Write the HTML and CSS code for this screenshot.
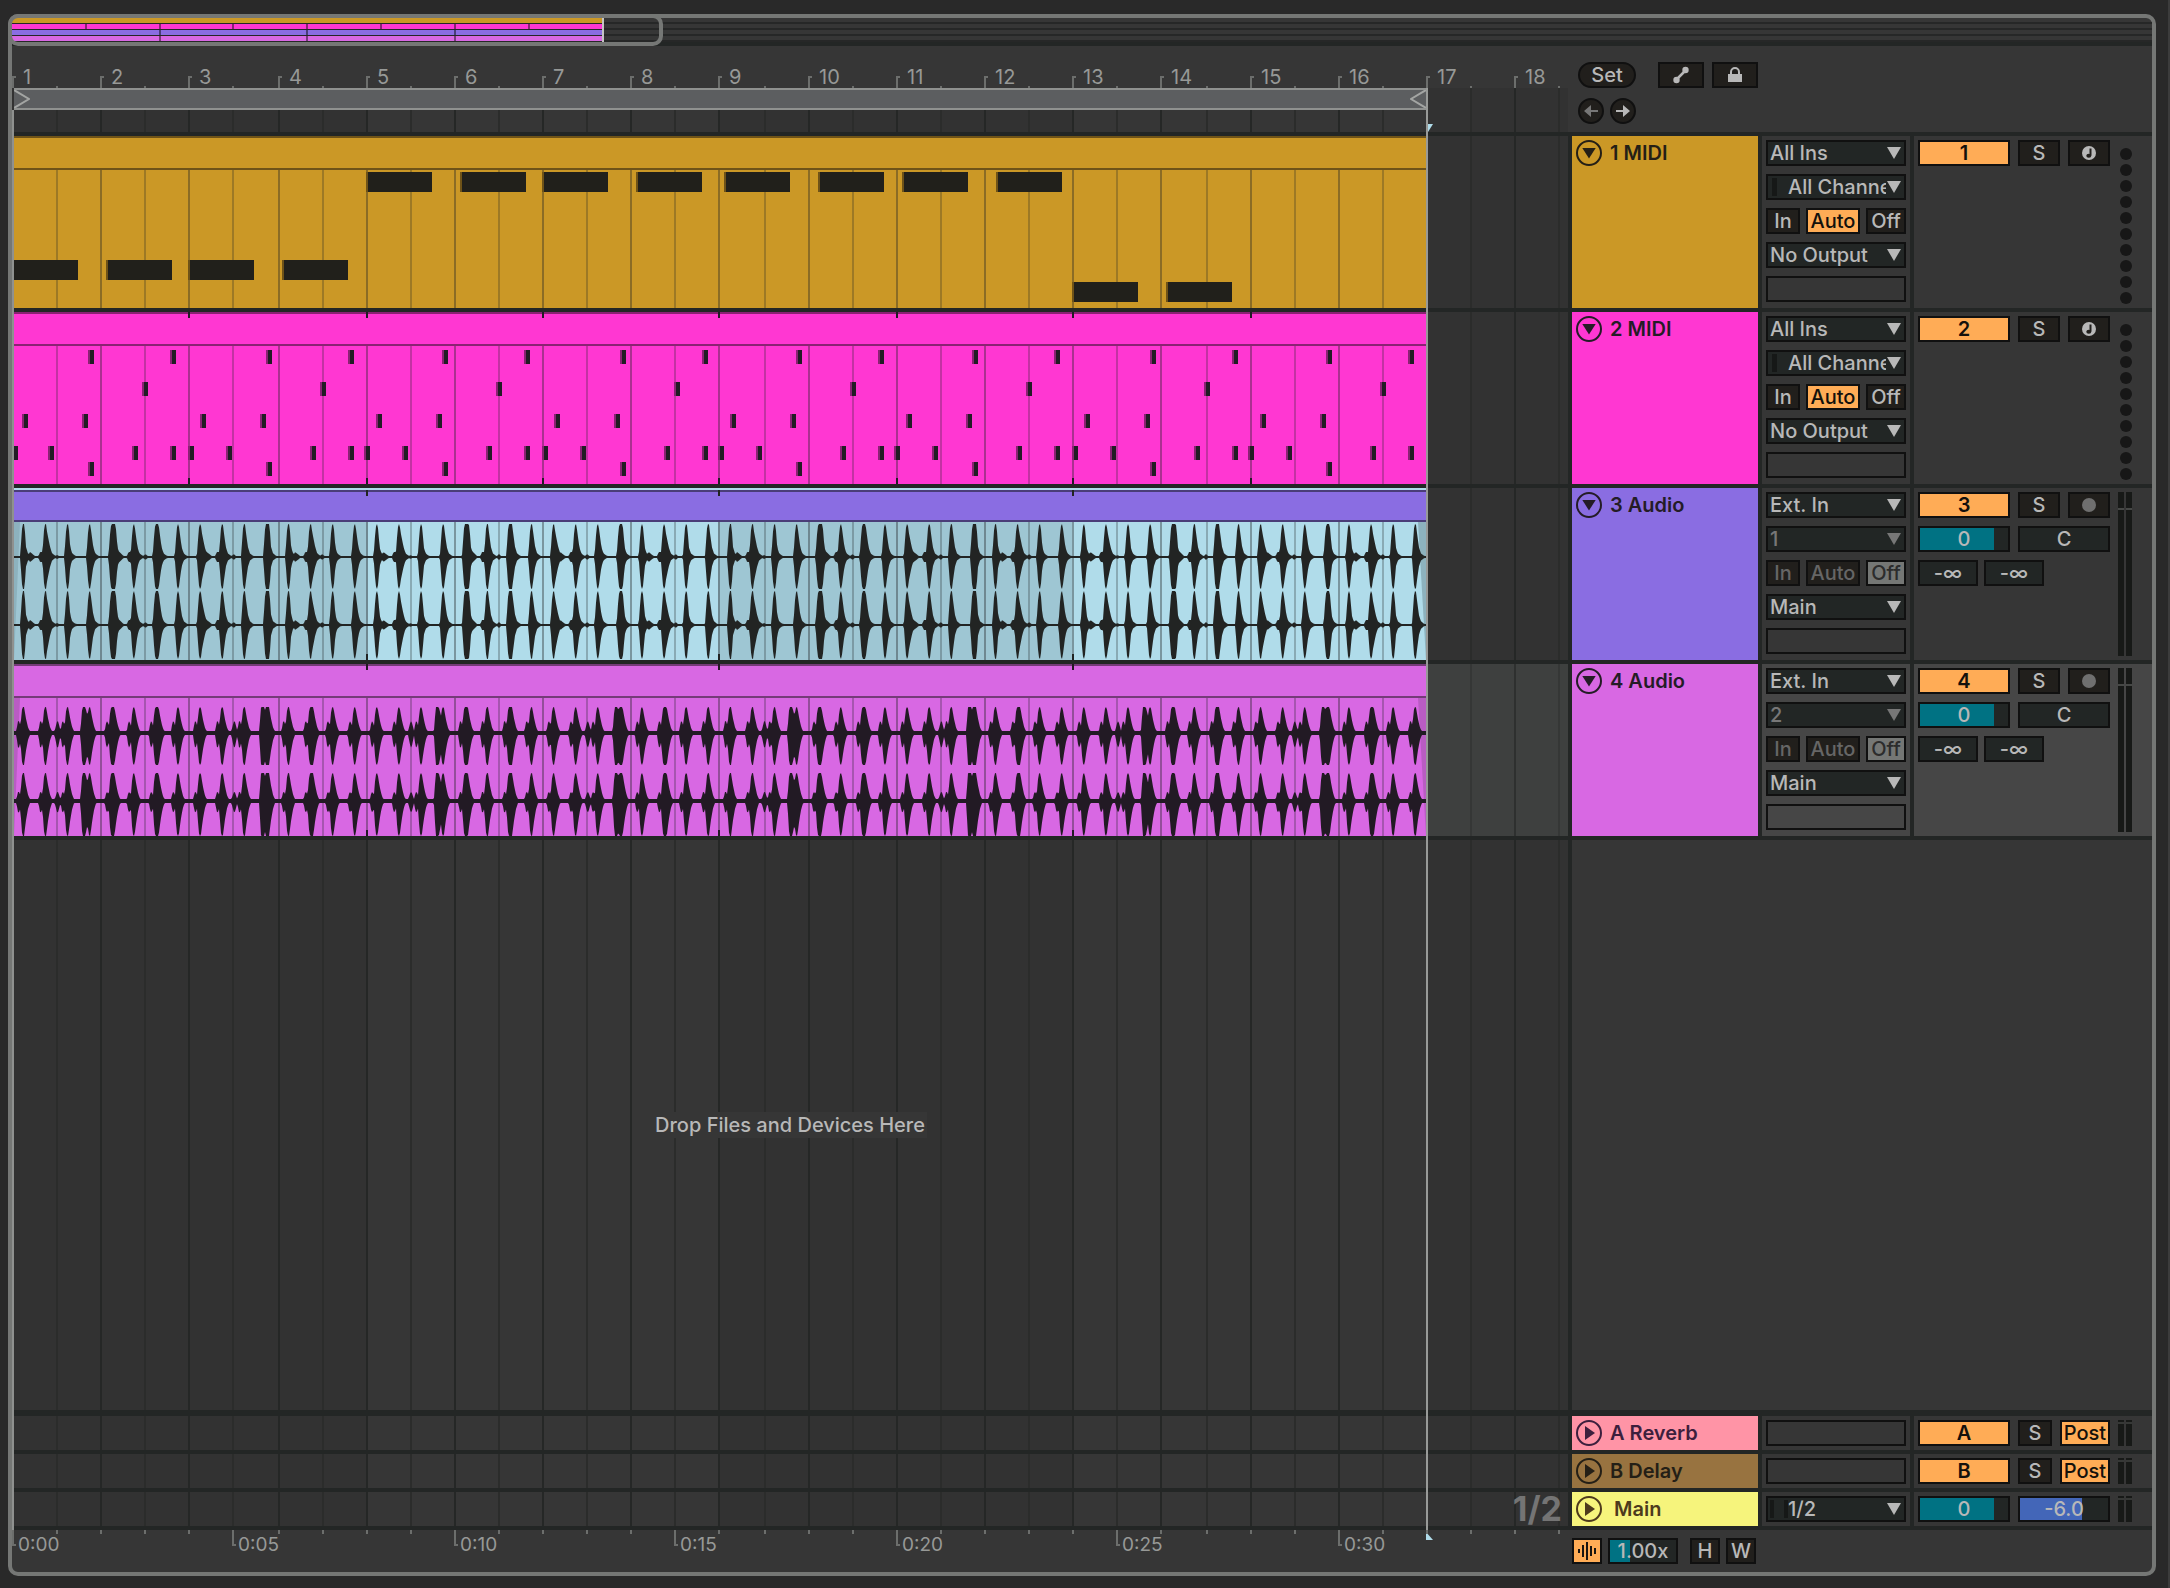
FILE: index.html
```html
<!DOCTYPE html>
<html lang="en">
<head>
<meta charset="utf-8">
<meta name="viewport" content="width=device-width, initial-scale=1">
<title>Arrangement</title>
<link rel="stylesheet" href="styles.css">
</head>
<body>
<main class="frame">
  <div class="overview" id="overview">
    <div class="overview-row"><div class="overview-clip gold"></div></div>
    <div class="overview-row"><div class="overview-clip pink" data-every="2"></div></div>
    <div class="overview-row"><div class="overview-clip violet" data-every="4"></div></div>
    <div class="overview-row"><div class="overview-clip orchid" data-every="4"></div></div>
    <div class="overview-end"></div>
    <div class="overview-view"></div>
  </div>

  <div class="arrangement">
    <header class="top">
      <div class="rulers">
        <div class="bar-ruler" id="bar-ruler"></div>
        <div class="lane scrub" data-lane>
          <div class="loop" data-span>
            <svg width="16" height="18" viewBox="0 0 16 18"><path d="M0 0L15 9L0 18" /></svg>
            <svg width="16" height="18" viewBox="0 0 16 18"><path d="M16 0L1 9L16 18" /></svg>
          </div>
        </div>
      </div>
      <div class="tools">
        <div class="tool-row">
          <button class="btn pill">Set</button>
          <button class="btn wide push" aria-label="Automation mode"><svg width="20" height="20" viewBox="0 0 20 20"><path d="M5 15L15 5" stroke="#b8b8b8" stroke-width="2.5"/><circle cx="5.500" cy="15" r="3.200" fill="#b8b8b8"/><circle cx="14.500" cy="5" r="3.200" fill="#b8b8b8"/></svg></button>
          <button class="btn wide" aria-label="Lock envelopes"><svg width="20" height="20" viewBox="0 0 20 20"><path d="M6 9V7a4 4 0 0 1 8 0v2" fill="none" stroke="#b8b8b8" stroke-width="2"/><rect x="3" y="9" width="14" height="8" fill="#b8b8b8"/></svg></button>
        </div>
        <div class="tool-row">
          <button class="btn round off" aria-label="Previous locator"><svg width="16" height="16" viewBox="0 0 16 16" fill="currentColor"><path d="M1 8L8 2V7H15V9H8V14Z"/></svg></button>
          <button class="btn round" aria-label="Next locator"><svg width="16" height="16" viewBox="0 0 16 16" fill="currentColor"><path d="M15 8L8 2V7H1V9H8V14Z"/></svg></button>
        </div>
      </div>
    </header>

    <section class="track">
      <div class="lane" data-lane>
        <div class="clip gold" data-span data-clip="bass"><div class="clip-title"></div></div>
      </div>
      <div class="head gold"><button class="fold" aria-label="Fold track"></button><span>1 MIDI</span></div>
      <div class="io">
        <div class="pick"><select aria-label="Input type"><option>All Ins</option></select></div>
        <div class="pick channel"><select aria-label="Input channel"><option>All Channels</option></select></div>
        <div class="monitor">
          <label><input type="radio" name="mon1"><span>In</span></label>
          <label><input type="radio" name="mon1" checked><span>Auto</span></label>
          <label><input type="radio" name="mon1"><span>Off</span></label>
        </div>
        <div class="pick"><select aria-label="Output type"><option>No Output</option></select></div>
        <div class="slot"></div>
      </div>
      <div class="mix">
        <div class="mix-controls">
          <div class="mix-row"><button class="btn on vol">1</button><button class="btn solo">S</button><button class="btn arm" aria-label="Arm"><svg width="16" height="16" viewBox="0 0 16 16"><circle cx="8" cy="8" r="7" fill="#b8b8b8"/><path d="M9.500 3.500V10.500" stroke="#211f1c" stroke-width="2"/><ellipse cx="7.800" cy="10.800" rx="2.500" ry="2" fill="#211f1c"/></svg></button></div>
        </div>
        <div class="dots"><i></i><i></i><i></i><i></i><i></i><i></i><i></i><i></i><i></i><i></i></div>
      </div>
    </section>

    <section class="track">
      <div class="lane" data-lane>
        <div class="clip pink" data-span data-clip="drums" data-every="2"><div class="clip-title"></div></div>
      </div>
      <div class="head pink"><button class="fold" aria-label="Fold track"></button><span>2 MIDI</span></div>
      <div class="io">
        <div class="pick"><select aria-label="Input type"><option>All Ins</option></select></div>
        <div class="pick channel"><select aria-label="Input channel"><option>All Channels</option></select></div>
        <div class="monitor">
          <label><input type="radio" name="mon2"><span>In</span></label>
          <label><input type="radio" name="mon2" checked><span>Auto</span></label>
          <label><input type="radio" name="mon2"><span>Off</span></label>
        </div>
        <div class="pick"><select aria-label="Output type"><option>No Output</option></select></div>
        <div class="slot"></div>
      </div>
      <div class="mix">
        <div class="mix-controls">
          <div class="mix-row"><button class="btn on vol">2</button><button class="btn solo">S</button><button class="btn arm" aria-label="Arm"><svg width="16" height="16" viewBox="0 0 16 16"><circle cx="8" cy="8" r="7" fill="#b8b8b8"/><path d="M9.500 3.500V10.500" stroke="#211f1c" stroke-width="2"/><ellipse cx="7.800" cy="10.800" rx="2.500" ry="2" fill="#211f1c"/></svg></button></div>
        </div>
        <div class="dots"><i></i><i></i><i></i><i></i><i></i><i></i><i></i><i></i><i></i><i></i></div>
      </div>
    </section>

    <section class="track">
      <div class="lane" data-lane>
        <div class="clip violet comped" data-span data-clip="kick" data-every="4"><div class="clip-title"></div></div>
      </div>
      <div class="head violet"><button class="fold" aria-label="Fold track"></button><span>3 Audio</span></div>
      <div class="io">
        <div class="pick"><select aria-label="Input type"><option>Ext. In</option></select></div>
        <div class="pick off"><select aria-label="Input channel"><option>1</option></select></div>
        <div class="monitor off">
          <label><input type="radio" name="mon3"><span>In</span></label>
          <label><input type="radio" name="mon3"><span>Auto</span></label>
          <label><input type="radio" name="mon3" checked><span>Off</span></label>
        </div>
        <div class="pick"><select aria-label="Output type"><option>Main</option></select></div>
        <div class="slot"></div>
      </div>
      <div class="mix">
        <div class="mix-controls">
          <div class="mix-row"><button class="btn on vol">3</button><button class="btn solo">S</button><button class="btn arm" aria-label="Arm"><svg width="16" height="16" viewBox="0 0 16 16"><circle cx="8" cy="8" r="7" fill="#6f6f6f"/></svg></button></div>
          <div class="mix-row"><input class="value volume" aria-label="Volume" value="0"><input class="value" aria-label="Pan" value="C"></div>
          <div class="mix-row sends"><input class="value send" aria-label="Send A" value="-∞"><input class="value send" aria-label="Send B" value="-∞"></div>
        </div>
        <div class="meters"><i></i><i></i></div>
      </div>
    </section>

    <section class="track selected">
      <div class="lane" data-lane>
        <div class="clip orchid" data-span data-clip="perc" data-every="4"><div class="clip-title"></div></div>
      </div>
      <div class="head orchid"><button class="fold" aria-label="Fold track"></button><span>4 Audio</span></div>
      <div class="io">
        <div class="pick"><select aria-label="Input type"><option>Ext. In</option></select></div>
        <div class="pick off"><select aria-label="Input channel"><option>2</option></select></div>
        <div class="monitor off">
          <label><input type="radio" name="mon4"><span>In</span></label>
          <label><input type="radio" name="mon4"><span>Auto</span></label>
          <label><input type="radio" name="mon4" checked><span>Off</span></label>
        </div>
        <div class="pick"><select aria-label="Output type"><option>Main</option></select></div>
        <div class="slot"></div>
      </div>
      <div class="mix">
        <div class="mix-controls">
          <div class="mix-row"><button class="btn on vol">4</button><button class="btn solo">S</button><button class="btn arm" aria-label="Arm"><svg width="16" height="16" viewBox="0 0 16 16"><circle cx="8" cy="8" r="7" fill="#6f6f6f"/></svg></button></div>
          <div class="mix-row"><input class="value volume" aria-label="Volume" value="0"><input class="value" aria-label="Pan" value="C"></div>
          <div class="mix-row sends"><input class="value send" aria-label="Send A" value="-∞"><input class="value send" aria-label="Send B" value="-∞"></div>
        </div>
        <div class="meters"><i></i><i></i></div>
      </div>
    </section>

    <section class="dropzone">
      <div class="lane" data-lane><p>Drop Files and Devices Here</p></div>
      <div class="dropzone-side"></div>
    </section>

    <section class="track slim">
      <div class="lane" data-lane></div>
      <div class="head rose"><button class="fold closed" aria-label="Unfold track"></button><span>A Reverb</span></div>
      <div class="io"><div class="slot"></div></div>
      <div class="mix">
        <div class="mix-controls"><div class="mix-row"><button class="btn on vol">A</button><button class="btn small">S</button><button class="btn on post">Post</button></div></div>
        <div class="meters"><i></i><i></i></div>
      </div>
    </section>
    <section class="track slim">
      <div class="lane" data-lane></div>
      <div class="head brown"><button class="fold closed" aria-label="Unfold track"></button><span>B Delay</span></div>
      <div class="io"><div class="slot"></div></div>
      <div class="mix">
        <div class="mix-controls"><div class="mix-row"><button class="btn on vol">B</button><button class="btn small">S</button><button class="btn on post">Post</button></div></div>
        <div class="meters"><i></i><i></i></div>
      </div>
    </section>
    <section class="track slim">
      <div class="lane" data-lane><span class="grid-size">1/2</span></div>
      <div class="head lemon"><button class="fold closed" aria-label="Unfold track"></button><span>Main</span></div>
      <div class="io"><div class="pick channel stereo"><select aria-label="Main output"><option>1/2</option></select></div></div>
      <div class="mix">
        <div class="mix-controls"><div class="mix-row"><input class="value volume" aria-label="Main volume" value="0"><input class="value cue" aria-label="Cue volume" value="-6.0"></div></div>
        <div class="meters"><i></i><i></i></div>
      </div>
    </section>

    <div class="start-line"></div>
    <div class="end-line" id="end-line">
      <svg class="flag-top" width="5" height="8" viewBox="0 0 5 8"><path d="M0 0H5L0 8Z"/></svg>
      <svg class="flag-bottom" width="7" height="8" viewBox="0 0 7 8"><path d="M0 0L7 8H0Z"/></svg>
    </div>
  </div>

  <footer class="bottom">
    <div class="time-ruler" id="time-ruler"></div>
    <div class="bottom-tools">
      <button class="btn on key" aria-label="Optimize waveforms"><svg width="20" height="20" viewBox="0 0 20 20" stroke="#1a1510" stroke-width="2"><path d="M2 8V12M6 4V16M10 1V19M14 5V15M18 7V13"/></svg></button>
      <input class="value zoomed" aria-label="Vertical zoom" value="1.00x">
      <button class="btn key gap">H</button>
      <button class="btn key">W</button>
    </div>
  </footer>
</main>
<script src="script.js"></script>
</body>
</html>
```
FILE: styles.css
```css
* { box-sizing: border-box; }

:root {
  --panel: #363636;
  --dark: #232625;
  --frame: #757775;
  --edge: #101010;
  --text: #b8b8b8;
  --orange: #ffac56;
  --teal: #007283;
}

body {
  margin: 0;
  min-height: 100vh;
  padding: 14px 12px 12px 8px;
  border-right: 2px solid #3c3c3c;
  background: #292929;
  color: var(--text);
  font: 500 20px/26px Inter, "Liberation Sans", sans-serif;
  display: flex;
}

button, select, input { font: inherit; color: inherit; border-radius: 0; }

.frame {
  flex: 1;
  min-width: 0;
  display: flex;
  flex-direction: column;
  border: 4px solid var(--frame);
  border-radius: 10px;
  background: var(--panel);
}

.gold { --clip: #cb9826; --clip-edge: #6f5318; --ink: #21201b; }
.pink { --clip: #ff37d2; --clip-edge: #8a2273; --ink: #221c25; }
.violet { --clip: #8a6de2; --clip-edge: #4a3d78; --ink: #222423; }
.orchid { --clip: #d868e3; --clip-edge: #753b79; --ink: #221a24; }
.rose { --clip: #ff94a6; }
.brown { --clip: #987340; }
.lemon { --clip: #f6f47c; }

/* Overview */
.overview {
  position: relative;
  height: 28px;
  border-bottom: 4px solid var(--dark);
}
.overview-row { height: 6px; border-bottom: 2px solid #262727; }
.overview-row:last-of-type { border-bottom: 0; }
.overview-clip { position: relative; height: 5px; width: 28%; background: var(--clip); }
.overview-clip i { position: absolute; top: 0; width: 2px; height: 5px; background: var(--clip-edge); }
.overview-end { position: absolute; top: 0; width: 2px; height: 24px; background: #c4c4c4; }
.overview-view {
  position: absolute;
  top: -4px;
  left: -4px;
  height: 32px;
  border: 4px solid var(--frame);
  border-radius: 10px;
}

/* Arrangement */
.arrangement { position: relative; flex: 1; display: flex; flex-direction: column; }

.top { display: flex; border-bottom: 4px solid var(--dark); }
.rulers { flex: 1; min-width: 0; }
.bar-ruler { position: relative; height: 42px; overflow: hidden; }
.tick { position: absolute; bottom: 0; width: 2px; height: 2px; background: #6c6e6c; }
.tick.bar { width: 4px; height: 12px; background: none; border-left: 2px solid #6c6e6c; border-top: 2px solid #6c6e6c; }
.bar-label { position: absolute; bottom: 0; font-size: 20px; line-height: 22px; font-weight: 400; color: #979997; }

.lane { position: relative; flex: 1; min-width: 0; overflow: hidden; }
.lane > .grid { position: absolute; top: 0; left: 0; width: 100%; height: 100%; }
.scrub { height: 44px; }
.loop {
  position: relative;
  height: 22px;
  margin-left: 2px;
  display: flex;
  justify-content: space-between;
  border: 2px solid #8f918f;
  border-width: 2px 0;
  background: #5c5e60;
}
.loop path { fill: none; stroke: #a3a5a3; stroke-width: 2; }

.tools { width: 584px; padding: 16px 0 0 10px; display: flex; flex-direction: column; gap: 10px; }
.tool-row { display: flex; gap: 8px; }
.tool-row + .tool-row { gap: 6px; }

.btn {
  height: 26px;
  padding: 0;
  border: 2px solid var(--edge);
  background: #211f1c;
  display: flex;
  align-items: center;
  justify-content: center;
  line-height: 22px;
}
.btn.on { background: var(--orange); color: #14110c; }
.btn.pill { width: 58px; border-radius: 13px; }
.btn.round { width: 26px; border-radius: 13px; }
.btn.off { color: #777; }
.btn.wide { width: 46px; }
.btn.push { margin-left: 14px; }
.btn.vol { width: 92px; font-weight: 600; }
.btn.solo, .btn.arm { width: 42px; }
.btn.small { width: 34px; }
.btn.post { width: 50px; }
.btn.key { width: 30px; }
.btn.gap { margin-left: 6px; }

/* Tracks */
.track { display: flex; border-bottom: 4px solid var(--dark); }
.head {
  width: 190px;
  border-left: 4px solid var(--dark);
  padding: 4px;
  display: flex;
  gap: 8px;
  background: var(--clip);
  color: #241c26;
  font-weight: 600;
}
.gold.head, .brown.head { color: #241f16; }
.rose.head { color: #3d1f3d; }
.lemon.head { color: #4d3a1c; }
.fold {
  width: 26px;
  height: 26px;
  padding: 0;
  border: 2px solid currentColor;
  border-radius: 13px;
  background: none;
  display: flex;
  align-items: center;
  justify-content: center;
}
.fold::before { content: ""; width: 14px; height: 11px; background: currentColor; clip-path: polygon(0 0, 100% 0, 50% 100%); }
.fold.closed::before { width: 10px; height: 14px; margin-left: 2px; clip-path: polygon(0 0, 100% 50%, 0 100%); }
.lemon span { padding-left: 4px; }

.io {
  width: 152px;
  border-left: 4px solid var(--dark);
  padding: 4px;
  display: flex;
  flex-direction: column;
  gap: 8px;
}
.mix { width: 242px; border-left: 4px solid var(--dark); padding: 4px; display: flex; gap: 8px; }
.selected .io, .selected .mix { background: #464646; }

.pick, .slot { height: 26px; border: 2px solid var(--edge); }
.pick { position: relative; background: #222625; }
.pick select {
  appearance: none;
  display: block;
  width: 100%;
  height: 22px;
  padding: 0 18px 0 2px;
  border: 0;
  background: none;
  line-height: 22px;
}
.pick::after {
  content: "";
  position: absolute;
  right: 3px;
  top: 5px;
  width: 14px;
  height: 12px;
  background: var(--text);
  clip-path: polygon(0 0, 100% 0, 50% 100%);
  pointer-events: none;
}
.pick.off { color: #777; }
.pick.off::after { background: #777; }
.pick.channel select { padding-left: 20px; }
.pick.channel::before { content: ""; position: absolute; left: 4px; top: 2px; width: 5px; height: 18px; background: #161817; }
.pick.stereo::before { left: 2px; width: 10px; border-right: 4px solid #161817; border-left: 4px solid #161817; background: none; }

.monitor { display: flex; gap: 6px; }
.monitor label { position: relative; height: 26px; border: 2px solid var(--edge); background: #211f1c; text-align: center; line-height: 22px; }
.monitor label:nth-child(1) { width: 34px; }
.monitor label:nth-child(2) { width: 54px; }
.monitor label:nth-child(3) { width: 40px; }
.monitor input { position: absolute; inset: 0; margin: 0; opacity: 0; }
.monitor span { display: flex; justify-content: center; }
.monitor label:has(:checked) { background: var(--orange); color: #14110c; }
.monitor.off label { color: #666; }
.monitor.off label:has(:checked) { background: #757775; color: #2c2c2c; }

.mix-controls { width: 192px; display: flex; flex-direction: column; gap: 8px; }
.mix-row { display: flex; gap: 8px; }
.mix-row.sends { gap: 6px; }
.value {
  width: 92px;
  height: 26px;
  padding: 0;
  border: 2px solid var(--edge);
  background: #222625;
  text-align: center;
  line-height: 22px;
}
.value.volume { background: linear-gradient(90deg, var(--teal) 74px, #222625 74px); }
.value.cue { background: linear-gradient(90deg, #4366b8 62px, #222625 62px); }
.value.send { width: 60px; }
.value.zoomed { width: 70px; background: linear-gradient(90deg, var(--teal) 20px, #222625 20px); }

.dots { display: flex; flex-direction: column; gap: 4px; padding: 8px 0 0 2px; }
.dots i { width: 12px; height: 12px; border-radius: 6px; background: #171717; }
.meters { display: flex; gap: 2px; }
.meters i { width: 6px; background: linear-gradient(#171917 16px, #464846 16px, #464846 18px, #171917 18px); }
.slim .meters i { background: linear-gradient(#171917 2px, #363836 2px, #363836 4px, #171917 4px); }

/* Clips */
.clip { position: relative; height: 172px; margin-left: 2px; display: flex; flex-direction: column; background: var(--clip); }
.clip-title { height: 34px; border: 2px solid var(--clip-edge); border-width: 2px 0; }
.clip svg { display: block; }
.comped { border-top: 2px solid #b0dcea; }
.comped .clip-title { height: 32px; }
.comped { background: #b0dcea; }
.comped .clip-title { background: var(--clip); }
.clip > i { position: absolute; width: 2px; height: 6px; background: var(--ink); }
.clip > i.head-mark { top: 0; }
.clip > i.foot-mark { bottom: 0; }

.selected .lane { background: #3e403f; }

.dropzone { flex: 1; display: flex; border-bottom: 6px solid var(--dark); }
.dropzone .lane { display: flex; align-items: center; justify-content: center; }
.dropzone p { position: relative; margin: 0; padding: 0 2px; background: #363636; }
.dropzone-side { width: 584px; border-left: 4px solid var(--dark); }

.slim { height: 38px; }
.slim .lane { overflow: visible; }
.grid-size { position: relative; display: block; padding-right: 6px; text-align: right; font-size: 34px; line-height: 34px; font-weight: 700; color: #747474; }

.start-line { position: absolute; left: 0; top: 64px; bottom: 0; width: 2px; background: #8f918f; }
.end-line { position: absolute; top: 42px; bottom: 0; width: 2px; background: #989a98; }
.end-line path { fill: #b0dcea; }
.flag-top { position: absolute; left: 2px; top: 36px; }
.flag-bottom { position: absolute; left: 0; bottom: -10px; }

/* Footer */
.bottom { display: flex; height: 42px; }
.time-ruler { position: relative; flex: 1; min-width: 0; overflow: hidden; }
.time-ruler .tick { top: 0; height: 4px; }
.time-ruler .tick.bar { height: 16px; border-top: 0; border-bottom: 2px solid #6c6e6c; }
.time-label { position: absolute; top: 4px; font-size: 19px; line-height: 22px; font-weight: 400; color: #979997; }
.bottom-tools { width: 584px; padding: 8px 4px; display: flex; gap: 6px; }
```
FILE: script.js
```js
const VISIBLE_BARS = 17.607;
const SONG_BARS = 16;
const OVERVIEW_BARS = 58;
const LABEL_SPACE = 48;
const NS = "http://www.w3.org/2000/svg";

let barWidth = 88;
// Grid positions snap to whole two-pixel steps so that lines stay crisp.
const snap = (bars) => 2 * Math.round((bars * barWidth) / 2);

function svg(tag, attrs, parent) {
  const node = document.createElementNS(NS, tag);
  for (const key in attrs) node.setAttribute(key, attrs[key]);
  if (parent) parent.append(node);
  return node;
}

function div(tag, className, left, parent, text) {
  const node = document.createElement(tag);
  node.className = className;
  node.style.left = left + "px";
  if (text) node.textContent = text;
  parent.append(node);
  return node;
}

const bassNotes = [
  [0, 1], [1.065, 1], [2, 1], [3.055, 1],
  [4, 0], [5.065, 0], [6, 0], [7.055, 0],
  [8.06, 0], [9.13, 0], [10.07, 0], [11.13, 0],
  [12, 2], [13.06, 2]
];
const bassRows = [2, 90, 112];

// [start in pixels of a 176.75px two-bar phrase, row]
const drumHits = [
  [76, 0], [158, 0], [130, 2], [10, 4], [70, 4],
  [0, 6], [36, 6], [120, 6], [158, 6], [76, 7]
];

// Beat shapes of the two audio loops, sixteen beats long.
const kickBeats = [
  { hold: 1, tail: 4, post: 5 }, { hold: 1, tail: 6, pre: 5, tick: 2 }, { hold: 1, tail: 4 }, { hold: 1, tail: 5 },
  { hold: 4, tail: 4, post: 6 }, { hold: 1, tail: 5, pre: 5, tick: 3 }, { hold: 3, tail: 5 }, { hold: 1, tail: 5 },
  { hold: 1, tail: 6, post: 5 }, { hold: 1, tail: 5, pre: 5, tick: 3 }, { hold: 1, tail: 5 }, { hold: 3, tail: 4 },
  { hold: 1, tail: 4, post: 5 }, { hold: 1, tail: 6, pre: 5, tick: 3 }, { hold: 1, tail: 4 }, { hold: 1, tail: 5 }
];
const percBeats = [
  { hold: 1 }, { hold: 1, tick: 1 }, { hold: 1 }, { hold: 1, double: 6 },
  { hold: 3 }, { hold: 1 }, { hold: 3 }, { hold: 1 },
  { hold: 1 }, { hold: 1, tick: 1 }, { hold: 1 }, { hold: 3, double: 4 },
  { hold: 1 }, { hold: 3 }, { hold: 1 }, { hold: 1 }
];

function sample(points, x) {
  for (let i = 1; i < points.length; i++) {
    const [x0, y0] = points[i - 1];
    const [x1, y1] = points[i];
    if (x >= x0 && x <= x1) return y0 + ((y1 - y0) * (x - x0)) / (x1 - x0 || 1);
  }
  return 0;
}

function kickLevel(beat, dx, height) {
  const end = beat.hold + beat.tail;
  const levels = [
    sample([[-3, 0], [-2, 0.4], [-1, 0.85], [0, 1], [beat.hold, 1], [beat.hold + 1, 0.75],
      [end - 2, 0.3], [end, 0.11], [end + 3, 0.04], [end + 7, 0.01]], dx) * height
  ];
  if (beat.post) levels.push(sample([[4, 0], [7, beat.post], [12, 1], [14, 0]], dx));
  if (beat.pre) levels.push(sample([[-7, 0], [-5, beat.pre], [-2, beat.pre]], dx));
  if (beat.tick) levels.push(sample([[9, 0], [12, beat.tick], [15, 0]], dx));
  return Math.max(1, ...levels);
}

function percLevel(beat, dx, height, small) {
  const h = beat.hold;
  const body = [[-3, 0], [-2, 0.5], [-1, 0.9], [0, 1], [h, 1], [h + 2, 0.55], [h + 4, 0.22], [h + 6, 0.05]];
  const levels = [
    sample(body, dx) * height,
    sample([[-7, 0], [-5, small], [-4, small], [-2, small * 0.5], [0, small]], dx) * height
  ];
  if (beat.double) levels.push(sample([[-4, 0], [-2, 1], [1, 1], [5, 0.4]], dx + beat.double - 1) * height);
  if (beat.tick) levels.push(sample([[9, 0], [12, small], [13, small], [16, 0]], dx) * height);
  return Math.max(2, ...levels);
}

function wavePath(width, center, up, down, level) {
  const step = barWidth / 4;
  const top = [];
  const low = [];
  for (let x = 0; x <= width; x++) {
    let a = 0;
    let b = 0;
    const near = Math.floor((x - 9) / step);
    for (let k = near - 1; k <= near + 1; k++) {
      const dx = x - 9 - k * step;
      const index = ((k % 16) + 16) % 16;
      if (k < 0) { a = Math.max(a, 1); b = Math.max(b, 1); continue; }
      a = Math.max(a, level(index, dx, up));
      b = Math.max(b, level(index, dx, down));
    }
    top.push(`${x} ${(center - a).toFixed(1)}`);
    low.unshift(`${x} ${(center + b).toFixed(1)}`);
  }
  return `M${top.join("L")}L${low.join("L")}Z`;
}

function drawGrid(lane) {
  lane.querySelector(".grid")?.remove();
  const grid = svg("svg", { class: "grid" });
  const selected = lane.closest(".selected");
  if (!selected) {
    for (let bar = 0; bar < VISIBLE_BARS; bar += 8) {
      svg("rect", { x: snap(bar), y: 0, width: snap(4), height: "100%", fill: "#323232" }, grid);
    }
  }
  for (let half = 1; half / 2 < VISIBLE_BARS; half++) {
    const fill = half % 2 ? (selected ? "#353736" : "#2b2c2b") : (selected ? "#2e302f" : "#252726");
    svg("rect", { x: snap(half / 2), y: 0, width: 2, height: "100%", fill }, grid);
  }
  lane.prepend(grid);
}

function drawClip(clip, width) {
  clip.querySelectorAll("svg, :scope > i").forEach((node) => node.remove());
  const kind = clip.dataset.clip;
  const body = svg("svg", { width, height: 138 }, clip);
  const style = getComputedStyle(clip);
  const ink = style.getPropertyValue("--ink");
  const edge = style.getPropertyValue("--clip-edge");

  if (kind === "kick") {
    for (const bar of [0, 8]) {
      svg("rect", { x: Math.max(0, snap(bar) - 2), y: 0, width: snap(4), height: 138, fill: "#9ec6d3" }, body);
    }
  }
  for (let half = 1; half < SONG_BARS * 2; half++) {
    svg("rect", { x: snap(half / 2) - 2, y: 0, width: 2, height: 138, fill: "#222426", "fill-opacity": half % 2 ? 0.27 : 0.38 }, body);
  }
  if (kind === "bass") {
    for (const [start, row] of bassNotes) {
      const x = snap(start) - 2;
      svg("rect", { x, y: bassRows[row], width: snap(0.75), height: 20, fill: edge }, body);
      svg("rect", { x: x + 2, y: bassRows[row], width: snap(0.75) - 2, height: 20, fill: ink }, body);
    }
  }
  if (kind === "drums") {
    for (let phrase = 0; phrase < 8; phrase++) {
      for (const [start, row] of drumHits) {
        const x = Math.floor((phrase * 2 * barWidth + (start * barWidth) / 88.375) / 2) * 2 - (start ? 0 : 2);
        svg("rect", { x, y: 4 + row * 16, width: 6, height: 14, fill: edge }, body);
        svg("rect", { x: x + 2, y: 4 + row * 16, width: 4, height: 14, fill: ink }, body);
      }
    }
  }
  if (kind === "kick" || kind === "perc") {
    const fade = kind === "kick" ? "#8db2be" : "#b95cc3";
    svg("path", { d: "M0 0H6L0 138Z", fill: fade }, body);
    svg("path", { d: `M${width} 0H${width - 8}L${width} 138Z`, fill: fade }, body);
  }
  if (kind === "kick") {
    const level = (i, dx, h) => kickLevel(kickBeats[i], dx, h);
    svg("path", { d: wavePath(width, 35, 33, 32, level), fill: ink }, body);
    svg("path", { d: wavePath(width, 103, 34, 34, level), fill: ink }, body);
  }
  if (kind === "perc") {
    svg("path", { d: wavePath(width, 35, 26, 32, (i, dx, h) => percLevel(percBeats[i], dx, h, 0.45)), fill: ink }, body);
    svg("path", { d: wavePath(width, 103, 28, 35, (i, dx, h) => percLevel(percBeats[i], dx, h, 0.32)), fill: ink }, body);
  }
  const every = Number(clip.dataset.every);
  for (let bar = every; every && bar < SONG_BARS; bar += every) {
    div("i", "head-mark", snap(bar) - 2, clip);
    div("i", "foot-mark", snap(bar) - 2, clip);
  }
}

function drawRulers() {
  const bars = document.getElementById("bar-ruler");
  const time = document.getElementById("time-ruler");
  bars.replaceChildren();
  time.replaceChildren();
  for (let half = 0; half / 2 < VISIBLE_BARS; half++) {
    const x = snap(half / 2);
    div("i", half % 2 ? "tick" : "tick bar", x, bars);
    if (half % 2 === 0) div("span", "bar-label", x + 11, bars, String(half / 2 + 1));
    // A time label is left out where the ruler's edge would cut it.
    const labelled = half % 5 === 0 && x + LABEL_SPACE < time.clientWidth;
    div("i", labelled ? "tick bar" : "tick", x, time);
    if (labelled) div("span", "time-label", x + 6, time, "0:" + String(half).padStart(2, "0"));
  }
}

function drawOverview() {
  const overview = document.getElementById("overview");
  const bar = overview.clientWidth / OVERVIEW_BARS;
  const end = Math.round(bar * SONG_BARS);
  overview.querySelectorAll(".overview-clip").forEach((clip) => {
    clip.style.width = end + "px";
    clip.replaceChildren();
    const every = Number(clip.dataset.every);
    for (let at = every; every && at < SONG_BARS; at += every) div("i", "", Math.round(at * bar) - 1, clip);
  });
  overview.querySelector(".overview-end").style.left = end + "px";
  overview.querySelector(".overview-view").style.width = Math.round(bar * VISIBLE_BARS) + 5 + "px";
}

function draw() {
  barWidth = document.getElementById("bar-ruler").clientWidth / VISIBLE_BARS;
  const width = snap(SONG_BARS) - 2;
  document.querySelectorAll("[data-span]").forEach((node) => { node.style.width = width + "px"; });
  document.querySelectorAll("[data-lane]").forEach(drawGrid);
  document.querySelectorAll("[data-clip]").forEach((clip) => drawClip(clip, width));
  document.getElementById("end-line").style.left = snap(SONG_BARS) + "px";
  drawRulers();
  drawOverview();
}

draw();
window.addEventListener("resize", draw);
```
